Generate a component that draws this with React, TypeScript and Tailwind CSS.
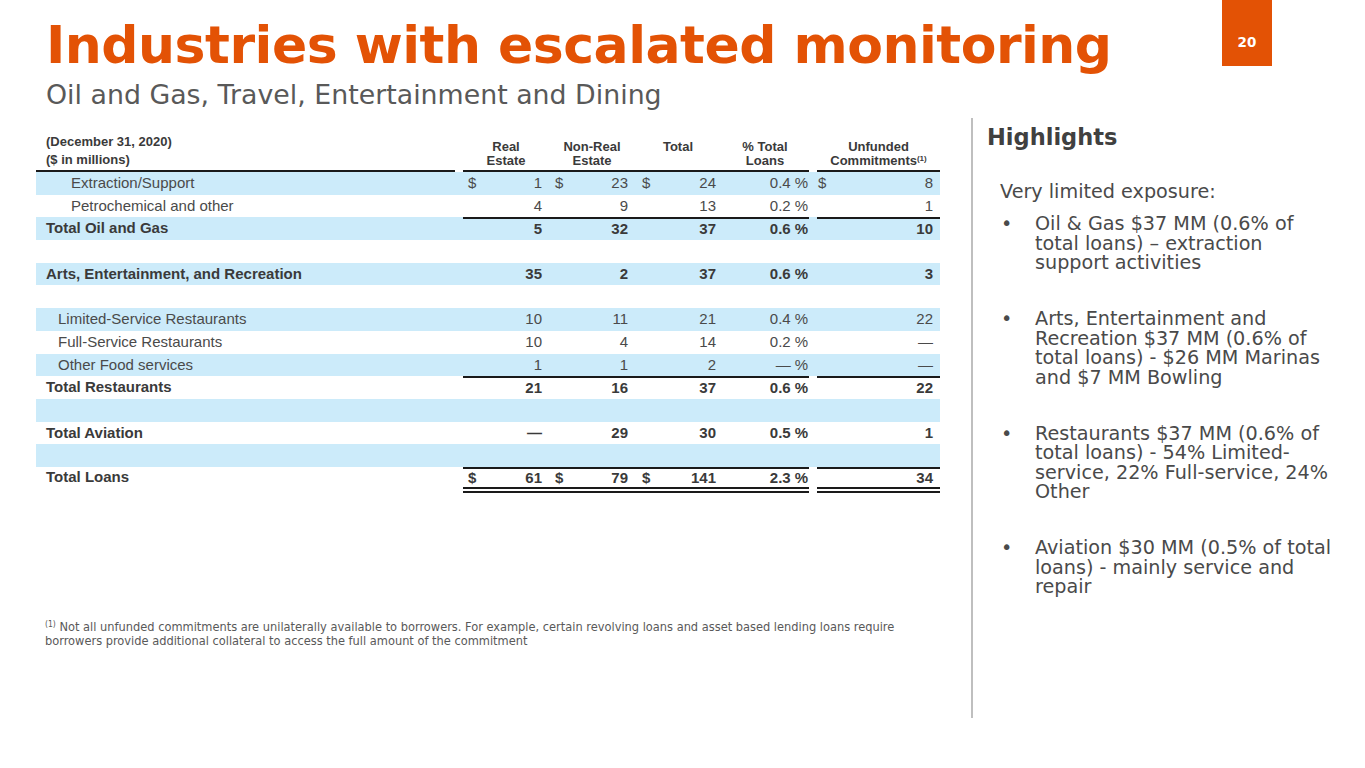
import React from "react";

type Cell = [boolean, string];

type Row = {
  label: string;
  indent?: 0 | 1 | 2;
  bold?: boolean;
  re?: Cell;
  nre?: Cell;
  tot?: Cell;
  pct?: string;
  unf?: Cell;
  line?: boolean;
};

const ROWS: Row[] = [
  { label: "Extraction/Support", indent: 2, re: [true, "1"], nre: [true, "23"], tot: [true, "24"], pct: "0.4", unf: [true, "8"] },
  { label: "Petrochemical and other", indent: 2, re: [false, "4"], nre: [false, "9"], tot: [false, "13"], pct: "0.2", unf: [false, "1"] },
  { label: "Total Oil and Gas", bold: true, line: true, re: [false, "5"], nre: [false, "32"], tot: [false, "37"], pct: "0.6", unf: [false, "10"] },
  { label: "" },
  { label: "Arts, Entertainment, and Recreation", bold: true, re: [false, "35"], nre: [false, "2"], tot: [false, "37"], pct: "0.6", unf: [false, "3"] },
  { label: "" },
  { label: "Limited-Service Restaurants", indent: 1, re: [false, "10"], nre: [false, "11"], tot: [false, "21"], pct: "0.4", unf: [false, "22"] },
  { label: "Full-Service Restaurants", indent: 1, re: [false, "10"], nre: [false, "4"], tot: [false, "14"], pct: "0.2", unf: [false, "—"] },
  { label: "Other Food services", indent: 1, re: [false, "1"], nre: [false, "1"], tot: [false, "2"], pct: "—", unf: [false, "—"] },
  { label: "Total Restaurants", bold: true, line: true, re: [false, "21"], nre: [false, "16"], tot: [false, "37"], pct: "0.6", unf: [false, "22"] },
  { label: "" },
  { label: "Total Aviation", bold: true, re: [false, "—"], nre: [false, "29"], tot: [false, "30"], pct: "0.5", unf: [false, "1"] },
  { label: "" },
];

const TOTAL: Row = { label: "Total Loans", bold: true, line: true, re: [true, "61"], nre: [true, "79"], tot: [true, "141"], pct: "2.3", unf: [false, "34"] };

const INDENT = ["pl-[10px]", "pl-[22px]", "pl-[35px]"];

const BULLETS = [
  ["Oil & Gas $37 MM (0.6% of", "total loans) – extraction", "support activities"],
  ["Arts, Entertainment and", "Recreation $37 MM (0.6% of", "total loans) - $26 MM Marinas", "and $7 MM Bowling"],
  ["Restaurants $37 MM (0.6% of", "total loans) - 54% Limited-", "service, 22% Full-service, 24%", "Other"],
  ["Aviation $30 MM (0.5% of total", "loans) - mainly service and", "repair"],
];

function TableRow({ row, blue, tall = true }: { row: Row; blue: boolean; tall?: boolean }) {
  const line = row.line ? "border-t-2 border-[#1a1a1a]" : "";
  const val = (c?: Cell) => (
    <>
      <span>{c && c[0] ? "$" : ""}</span>
      <span>{c ? c[1] : ""}</span>
    </>
  );
  return (
    <div
      className={`flex ${tall ? "h-[22.7px]" : "h-[20px]"} ${blue ? "bg-[#CCEBFA]" : ""} ${
        row.bold ? "font-bold text-[#3a3a3a]" : "text-[#4a4a4a]"
      }`}
    >
      <div className={`w-[427px] flex items-center whitespace-nowrap ${INDENT[row.indent ?? 0]}`}>{row.label}</div>
      <div className={`w-[86px] flex items-center justify-between pl-[5px] pr-[7px] ${line}`}>{val(row.re)}</div>
      <div className={`w-[86px] flex items-center justify-between pl-[6px] pr-[7px] ${line}`}>{val(row.nre)}</div>
      <div className={`w-[86px] flex items-center justify-between pl-[7px] pr-[5px] ${line}`}>{val(row.tot)}</div>
      <div className={`w-[88px] flex items-center justify-end pr-[1px] ${line}`}>
        {row.pct && (
          <>
            <span>{row.pct}</span>
            <span className="ml-[4px]">%</span>
          </>
        )}
      </div>
      <div className="w-[8px]" />
      <div className={`w-[123px] flex items-center justify-between pl-[1px] pr-[7px] ${line}`}>{val(row.unf)}</div>
    </div>
  );
}

export default function App() {
  return (
    <div className="w-[1365px] h-[768px] bg-white overflow-hidden flex flex-col">
      {/* Title */}
      <div className="flex items-start">
        <div className="pl-[46px] pt-[19px]">
          <h1 className="font-['DejaVu_Sans',Verdana,sans-serif] font-bold text-[52px] leading-[52px] text-[#E35205] whitespace-nowrap tracking-[-0.5px]">
            Industries with escalated monitoring
          </h1>
          <p className="mt-[11px] font-['DejaVu_Sans',Verdana,sans-serif] text-[26.8px] leading-[26px] text-[#595959] whitespace-nowrap">
            Oil and Gas, Travel, Entertainment and Dining
          </p>
        </div>
        <div className="ml-auto mr-[93px] w-[50px] h-[66px] bg-[#E35205] flex items-end justify-center pb-[16px] font-['DejaVu_Sans',Verdana,sans-serif] font-bold text-[13.5px] leading-[16px] text-white">
          20
        </div>
      </div>

      {/* Body */}
      <div className="flex mt-[10px]">
        {/* Table + footnote */}
        <div className="ml-[36px] w-[904px] pt-[15px] font-['Liberation_Sans',Arial,sans-serif] text-[15px]">
          <div className="flex items-end h-[39px] text-[13px] font-bold text-[#3a3a3a]">
            <div className="w-[427px] pr-[8px]">
              <div className="border-b-2 border-[#1a1a1a] pl-[10px] leading-[18px] pb-[1px]">
                <div>(December 31, 2020)</div>
                <div>($ in millions)</div>
              </div>
            </div>
            <div className="flex border-b-2 border-[#1a1a1a] leading-[14px]">
              <div className="w-[86px] text-center pb-[2px]">
                Real
                <br />
                Estate
              </div>
              <div className="w-[86px] text-center pb-[2px]">
                Non-Real
                <br />
                Estate
              </div>
              <div className="w-[86px] text-center pb-[2px]">Total</div>
              <div className="w-[88px] text-center pb-[2px]">
                % Total
                <br />
                Loans
              </div>
            </div>
            <div className="w-[8px]" />
            <div className="w-[123px] border-b-2 border-[#1a1a1a] text-center leading-[14px] pb-[2px]">
              Unfunded
              <br />
              Commitments<sup className="text-[8px]">(1)</sup>
            </div>
          </div>

          {ROWS.map((r, i) => (
            <TableRow key={i} row={r} blue={i % 2 === 0} />
          ))}
          <TableRow row={TOTAL} blue={false} tall={false} />
          <div className="flex h-[6px]">
            <div className="w-[427px]" />
            <div className="w-[346px] border-t-2 border-b-2 border-[#1a1a1a]" />
            <div className="w-[8px]" />
            <div className="w-[123px] border-t-2 border-b-2 border-[#1a1a1a]" />
          </div>

          <p className="mt-[127px] pl-[9px] font-['DejaVu_Sans_Condensed',Tahoma,sans-serif] text-[12.7px] leading-[14px] text-[#595959] whitespace-nowrap">
            <sup className="text-[8.5px]">(1)</sup> Not all unfunded commitments are unilaterally available to borrowers. For
            example, certain revolving loans and asset based lending loans require
            <br />
            borrowers provide additional collateral to access the full amount of the commitment
          </p>
        </div>

        {/* Highlights */}
        <div className="ml-[31px] h-[600px] border-l-2 border-[#BFBFBF] pl-[14px] pt-[6px] font-['DejaVu_Sans',Verdana,sans-serif]">
          <h2 className="text-[22.5px] leading-[26px] font-bold text-[#404040]">Highlights</h2>
          <div className="pl-[13px] mt-[32px] text-[19.2px] leading-[19.5px] text-[#4a4a4a]">
            <p className="whitespace-nowrap">Very limited exposure:</p>
            <ul className="mt-[12.5px] flex flex-col gap-[36.5px]">
              {BULLETS.map((lines, i) => (
                <li key={i} className="flex">
                  <span className="w-[35px] pl-[1px] shrink-0">•</span>
                  <span className="whitespace-nowrap">
                    {lines.map((l, j) => (
                      <React.Fragment key={j}>
                        {j > 0 && <br />}
                        {l}
                      </React.Fragment>
                    ))}
                  </span>
                </li>
              ))}
            </ul>
          </div>
        </div>
      </div>
    </div>
  );
}
